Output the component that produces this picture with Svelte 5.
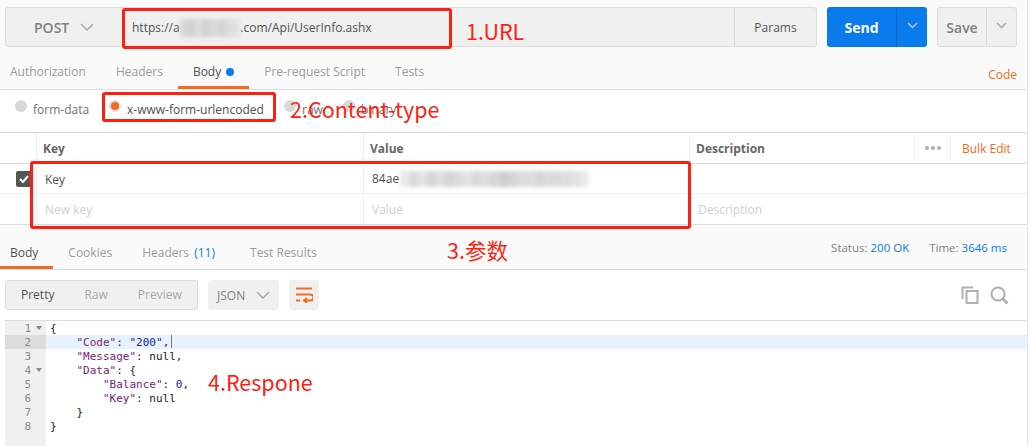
<script>
  const tabs = ["Authorization", "Headers", "Body", "Pre-request Script", "Tests"];
  const bodyTypes = ["form-data", "x-www-form-urlencoded", "raw", "binary"];
  const urlBlur = [75, 95, 60, 90, 70, 85, 60, 45];
  const valueBlur = [45, 75, 60, 85, 70, 90, 75, 60, 80, 70, 85, 100, 90, 75, 70, 85, 75, 80, 70, 60, 45];
  const lines = [
    { n: 1, fold: true, html: "{" },
    { n: 2, active: true, html: '    <i class="k">"Code"</i>: <i class="s">"200"</i>,' },
    { n: 3, html: '    <i class="k">"Message"</i>: null,' },
    { n: 4, fold: true, html: '    <i class="k">"Data"</i>: {' },
    { n: 5, html: '        <i class="k">"Balance"</i>: <i class="s">0</i>,' },
    { n: 6, html: '        <i class="k">"Key"</i>: null' },
    { n: 7, html: "    }" },
    { n: 8, html: "}" }
  ];
</script>

<div class="page">
  <section class="request">
    <div class="url-row">
      <div class="url-group">
        <div class="method">POST
          <svg width="14" height="8" viewBox="0 0 14 8"><path d="M1 1l6 6 6-6" /></svg>
        </div>
        <div class="url">https://a<span class="blur">{#each urlBlur as b}<b style="opacity: {b / 100}"></b>{/each}</span>.com/Api/UserInfo.ashx</div>
        <div class="params">Params</div>
      </div>
      <div class="send">
        <span class="send-label">Send</span>
        <span class="send-arrow"><svg width="11" height="7" viewBox="0 0 11 7"><path d="M1 1l4.500 4.500 4.500-4.500" /></svg></span>
      </div>
      <div class="save">
        <span class="save-label">Save</span>
        <span class="save-arrow"><svg width="11" height="7" viewBox="0 0 11 7"><path d="M1 1l4.500 4.500 4.500-4.500" /></svg></span>
      </div>
    </div>
    <nav class="tabs">
      {#each tabs as tab}
        <span class="tab" class:on={tab === "Body"}>{tab}{#if tab === "Body"}<em class="dot"></em>{/if}</span>
      {/each}
      <span class="code">Code</span>
    </nav>
  </section>

  <div class="types">
    {#each bodyTypes as type, i}
      <label class="type t{i}"><span class="radio" class:checked={i === 1}></span>{type}</label>
    {/each}
  </div>

  <div class="table">
    <div class="row head">
      <div class="check"></div>
      <div class="c key">Key</div>
      <div class="c value">Value</div>
      <div class="c desc">Description</div>
      <div class="more"><span></span><span></span><span></span></div>
      <div class="bulk">Bulk Edit</div>
    </div>
    <div class="row">
      <div class="check"><span class="box"><svg width="10" height="8" viewBox="0 0 10 8"><path d="M1 4l3 3 5-6" /></svg></span></div>
      <div class="c key">Key</div>
      <div class="c value">84ae<span class="blur tall">{#each valueBlur as b}<b style="opacity: {b / 100}"></b>{/each}</span></div>
      <div class="c desc wide"></div>
    </div>
    <div class="row last">
      <div class="check"></div>
      <div class="c key ph">New key</div>
      <div class="c value ph">Value</div>
      <div class="c desc wide ph">Description</div>
    </div>
  </div>

  <section class="response-bar">
    <span class="rtab on">Body</span>
    <span class="rtab">Cookies</span>
    <span class="rtab headers">Headers <u>(11)</u></span>
    <span class="rtab">Test Results</span>
    <span class="status">Status: <u>200 OK</u></span>
    <span class="time">Time: <u>3646 ms</u></span>
  </section>

  <div class="tools">
    <div class="views">
      <span class="view on">Pretty</span>
      <span class="view">Raw</span>
      <span class="view">Preview</span>
    </div>
    <div class="format">JSON
      <svg width="14" height="8" viewBox="0 0 14 8"><path d="M1 1l6 6 6-6" /></svg>
    </div>
    <div class="wrap">
      <svg width="18" height="16" viewBox="0 0 18 16"><path d="M1 1.500h16M1 7.500h14.500a2.500 2.500 0 0 1 0 6h-6M12 11l-3 2.500 3 2.500M1 13.500h4" /></svg>
    </div>
    <div class="tool-icons">
      <svg width="18" height="18" viewBox="0 0 18 18"><path d="M12 1.500H1.500V13M5.500 5h11v12h-11z" /></svg>
      <svg width="19" height="19" viewBox="0 0 19 19"><circle cx="8" cy="8" r="6.500" /><path class="thick" d="M12.500 12.500l5 5" /></svg>
    </div>
  </div>

  <div class="editor">
    {#each lines as line}
      <div class="line" class:active={line.active}>
        <span class="num">{line.n}{#if line.fold}<em class="fold"></em>{/if}</span>
        <pre class="src">{@html line.html}{#if line.active}<span class="cursor"></span>{/if}</pre>
      </div>
    {/each}
  </div>

  <div class="mark m-url"></div>
  <div class="mark m-type"></div>
  <div class="mark m-params"></div>
  <span class="note n1">1.URL</span>
  <span class="note n2">2.Content-type</span>
  <span class="note n3">3.参数</span>
  <span class="note n4">4.Respone</span>
</div>

<style>
  :global(body) {
    background: #fff;
  }
  .page {
    position: relative;
    width: 1028px;
    height: 446px;
    overflow: hidden;
    box-sizing: border-box;
    border-right: 1px solid #e6e6e6;
    font-family: "Open Sans", sans-serif;
    font-size: 12px;
    color: #808080;
    background: #fff;
  }
  svg {
    fill: none;
    stroke: currentColor;
    display: block;
  }
  .request {
    height: 90px;
    box-sizing: border-box;
    background: #fafafa;
    border-bottom: 1px solid #dcdcdc;
    padding: 7px 0 0 5px;
  }
  .url-row {
    display: flex;
    height: 40px;
  }
  .url-group {
    display: flex;
    width: 812px;
    box-sizing: border-box;
    background: #f0f0f0;
    border: 1px solid #dcdcdc;
    border-radius: 3px;
    color: #505050;
  }
  .method {
    width: 116px;
    display: flex;
    align-items: center;
    gap: 11px;
    padding-left: 28px;
    box-sizing: border-box;
    font-size: 14px;
    font-weight: 600;
    color: #808080;
  }
  .method svg, .format svg {
    color: #a8a8a8;
    stroke-width: 1.5;
  }
  .url {
    flex: 1;
    display: flex;
    align-items: center;
    padding-left: 10px;
    white-space: pre;
    color: #505050;
  }
  .blur {
    display: inline-flex;
    height: 18px;
    margin-top: 2px;
    filter: blur(2px);
  }
  .blur b {
    width: 7.600px;
    background: #cfcfcf;
  }
  .params {
    width: 81px;
    border-left: 1px solid #dcdcdc;
    text-align: center;
    line-height: 40px;
    color: #555;
  }
  .send {
    display: flex;
    width: 100px;
    margin-left: 10px;
    background: #097bed;
    border-radius: 3px;
    color: #fff;
    font-size: 14px;
    font-weight: 700;
  }
  .send-label {
    width: 69px;
    text-align: center;
    line-height: 41px;
    border-right: 1px solid #0866c6;
  }
  .send-arrow, .save-arrow {
    flex: 1;
    display: flex;
    align-items: center;
    justify-content: center;
    padding-bottom: 4px;
  }
  .send-arrow svg {
    color: #a9c9ea;
    stroke-width: 1.5;
  }
  .save {
    display: flex;
    width: 80px;
    margin-left: 10px;
    box-sizing: border-box;
    background: #f0f0f0;
    border: 1px solid #dcdcdc;
    border-radius: 3px;
    font-size: 14px;
    font-weight: 600;
    color: #808080;
  }
  .save-label {
    width: 48px;
    text-align: center;
    line-height: 39px;
    border-right: 1px solid #dcdcdc;
  }
  .save-arrow svg {
    color: #a8a8a8;
    stroke-width: 1.5;
  }
  .tabs {
    position: relative;
    display: flex;
    margin: 11px 0 0 -5px;
    padding-left: 10px;
    height: 31px;
    line-height: 28px;
    color: #9b9b9b;
  }
  .tab {
    margin-right: 30px;
    height: 28px;
    position: relative;
  }
  .tab.on {
    color: #505050;
  }
  .tab.on::after {
    content: "";
    position: absolute;
    left: -15px;
    right: -15px;
    bottom: -3px;
    height: 3px;
    background: #f26b21;
  }
  .dot {
    display: inline-block;
    width: 8px;
    height: 8px;
    margin-left: 5px;
    border-radius: 50%;
    background: #097bed;
  }
  .code {
    margin-left: auto;
    margin-right: 10px;
    line-height: 34px;
    color: #f26b21;
  }
  .types {
    height: 43px;
    display: flex;
    align-items: center;
    padding: 0 0 3px 15px;
    box-sizing: border-box;
    color: #707070;
    border-bottom: 1px solid #dcdcdc;
  }
  .type {
    display: flex;
    align-items: center;
    gap: 6px;
  }
  .t0 { width: 94px; }
  .t1 { width: 175px; color: #505050; }
  .t2 { width: 59px; }
  .radio {
    width: 12px;
    height: 12px;
    margin-top: -7px;
    border-radius: 50%;
    background: #d8d8d8;
    box-sizing: border-box;
  }
  .radio.checked {
    background: #f26b21;
    border: 2px solid #ddd;
  }
  .row {
    display: flex;
    height: 30px;
    box-sizing: border-box;
    align-items: stretch;
    border-bottom: 1px solid #f0f0f0;
    line-height: 31px;
    color: #505050;
  }
  .head {
    height: 31px;
    border-bottom-color: #dcdcdc;
    font-weight: 700;
    color: #666;
  }
  .head .key, .head .value {
    padding-left: 6px;
  }
  .last {
    height: 31px;
    border-bottom-color: #dcdcdc;
  }
  .check {
    width: 37px;
    flex-shrink: 0;
    display: flex;
    align-items: center;
    justify-content: flex-end;
    border-right: 1px solid #f0f0f0;
    padding-right: 4px;
    box-sizing: border-box;
  }
  .box {
    width: 16px;
    height: 16px;
    background: #555;
    border-radius: 2px;
    display: flex;
    align-items: center;
    justify-content: center;
    color: #fff;
  }
  .box svg {
    stroke-width: 2;
  }
  .c {
    box-sizing: border-box;
    padding-left: 8px;
    white-space: nowrap;
  }
  .key {
    width: 327px;
    border-right: 1px solid #f0f0f0;
  }
  .value {
    width: 326px;
    display: flex;
    align-items: center;
    border-right: 1px solid #f0f0f0;
    padding-left: 8px;
  }
  .desc {
    width: 224px;
    padding-left: 6px;
  }
  .desc.wide {
    flex: 1;
    padding-left: 8px;
  }
  .ph {
    color: #d0d0d0;
  }
  .blur.tall {
    height: 16px;
    margin-top: 0;
    margin-left: 1px;
  }
  .blur.tall b {
    width: 9px;
  }
  .more {
    width: 37px;
    display: flex;
    align-items: center;
    justify-content: center;
    gap: 2px;
    border-left: 1px solid #f0f0f0;
    border-right: 1px solid #f0f0f0;
    box-sizing: border-box;
  }
  .more span {
    width: 4px;
    height: 4px;
    border-radius: 50%;
    background: #b0b0b0;
  }
  .bulk {
    flex: 1;
    padding-left: 11px;
    font-weight: 400;
    color: #f26b21;
  }
  .response-bar {
    height: 45px;
    box-sizing: border-box;
    display: flex;
    padding: 0 0 0 10px;
    background: #fafafa;
    border-bottom: 1px solid #dcdcdc;
    line-height: 55px;
    color: #9b9b9b;
  }
  .rtab {
    margin-right: 30px;
    position: relative;
    height: 44px;
  }
  .rtab.headers {
    margin-right: 35px;
  }
  .rtab u {
    margin-left: 2px;
  }
  .rtab.on {
    color: #505050;
  }
  .rtab.on::after {
    content: "";
    position: absolute;
    left: -10px;
    right: -15px;
    bottom: 0;
    height: 3px;
    background: #f26b21;
  }
  u {
    text-decoration: none;
    color: #097bed;
  }
  .status {
    margin-left: auto;
    line-height: 46px;
    font-size: 11.500px;
    color: #808080;
  }
  .time {
    margin-left: 20px;
    margin-right: 20px;
    line-height: 46px;
    font-size: 11.500px;
    color: #808080;
  }
  .tools {
    display: flex;
    align-items: flex-start;
    height: 50px;
    box-sizing: border-box;
    padding: 10px 0 0 5px;
  }
  .views {
    display: flex;
    width: 193px;
    height: 30px;
    box-sizing: border-box;
    background: #f0f0f0;
    border: 1px solid #dcdcdc;
    border-radius: 3px;
    line-height: 28px;
    color: #a8a8a8;
  }
  .view {
    margin-left: 15px;
    margin-right: 15px;
  }
  .view.on {
    color: #505050;
  }
  .format {
    display: flex;
    align-items: center;
    gap: 11px;
    width: 71px;
    height: 30px;
    margin-left: 10px;
    padding-left: 9px;
    box-sizing: border-box;
    background: #f0f0f0;
    border-radius: 3px;
    color: #808080;
  }
  .wrap {
    width: 30px;
    height: 30px;
    margin-left: 10px;
    display: flex;
    align-items: center;
    justify-content: center;
    background: #f0f0f0;
    border-radius: 3px;
    color: #f26b21;
  }
  .wrap svg {
    stroke-width: 2;
  }
  .tool-icons {
    margin-left: auto;
    margin-right: 18px;
    display: flex;
    gap: 11px;
    margin-top: 6px;
    color: #b0b0b0;
  }
  .tool-icons svg {
    stroke-width: 2;
  }
  .tool-icons .thick {
    stroke-width: 3;
  }
  .editor {
    margin-left: 5px;
    border-top: 1px solid #dcdcdc;
    font-family: "DejaVu Sans Mono", monospace;
    font-size: 11px;
    color: #222;
    position: relative;
    height: 126px;
    background: linear-gradient(90deg, #f0f0f0 41px, #fff 41px);
  }
  .line {
    display: flex;
    height: 14px;
    line-height: 15px;
  }
  .line.active {
    background: #e8f2fc;
  }
  .num {
    width: 41px;
    box-sizing: border-box;
    padding-right: 15px;
    text-align: right;
    position: relative;
    color: #8a8a8a;
    flex-shrink: 0;
  }
  .line.active .num {
    background: #dcdcdc;
  }
  .fold {
    position: absolute;
    right: 4px;
    top: 5px;
    border: 3px solid transparent;
    border-top: 4px solid #888;
    border-bottom: 0;
  }
  .src {
    margin: 0 0 0 4px;
    font: inherit;
  }
  .src :global(i) {
    font-style: normal;
  }
  .src :global(.k) {
    color: #7a1e6c;
  }
  .src :global(.s) {
    color: #1a1aa6;
  }
  .cursor {
    display: inline-block;
    width: 1px;
    height: 13px;
    margin-left: 2px;
    vertical-align: top;
    background: #777;
  }
  .mark {
    position: absolute;
    box-sizing: border-box;
    border: 3px solid #ff1e12;
    border-radius: 3px;
  }
  .m-url {
    left: 122px;
    top: 8px;
    width: 330px;
    height: 41px;
  }
  .m-type {
    left: 102px;
    top: 92px;
    width: 174px;
    height: 30px;
  }
  .m-params {
    left: 30px;
    top: 161px;
    width: 661px;
    height: 68px;
  }
  .note {
    position: absolute;
    font-family: "Noto Sans CJK SC", "Noto Sans", sans-serif;
    font-size: 21.500px;
    line-height: 26px;
    color: #ff1e12;
    white-space: nowrap;
  }
  .n1 { left: 466px; top: 18px; }
  .n2 { left: 290px; top: 96px; }
  .n3 { left: 447px; top: 237px; }
  .n4 { left: 208px; top: 369px; }
</style>
